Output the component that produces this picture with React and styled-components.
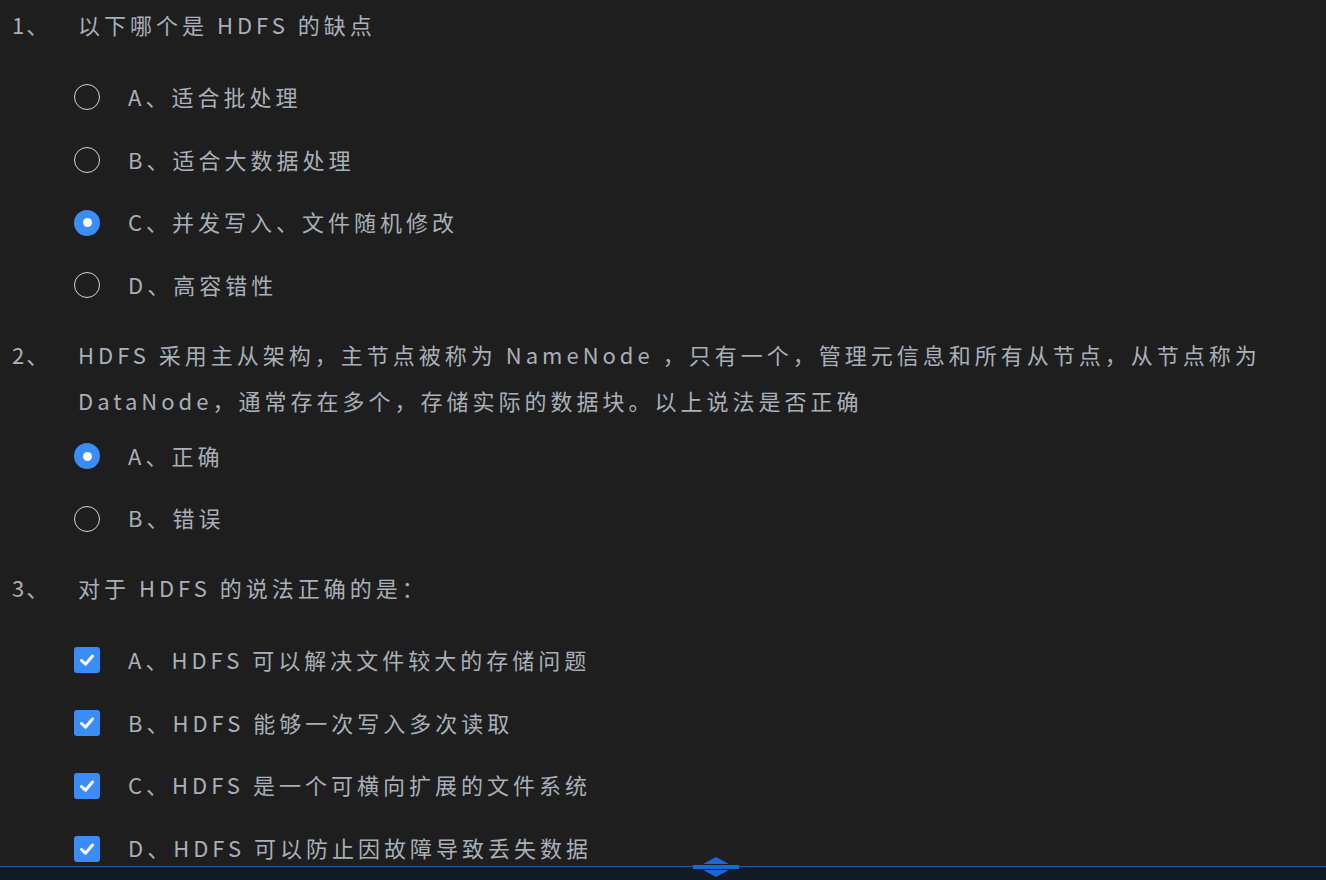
import React from 'react';
import styled, { createGlobalStyle } from 'styled-components';

const GlobalStyle = createGlobalStyle`
	html, body {
		margin: 0;
		padding: 0;
		background: #1e1e1e;
	}
	body {
		font-family: 'Noto Sans CJK SC', 'Noto Sans', sans-serif;
	}
`;

const Page = styled.main`
	height: 880px;
	width: 1326px;
	display: flex;
	flex-direction: column;
	background: #1e1e1e;
	overflow: hidden;
`;

const Scroll = styled.section`
	flex: 1;
	overflow: hidden;
	padding: 3px 0 0 12px;
	display: flex;
	flex-direction: column;
	gap: 16px;
`;

const Question = styled.div`
	display: flex;
	flex-direction: column;
`;

const Title = styled.div`
	display: flex;
	min-height: 63px;
	font-size: 22px;
	line-height: 46px;
	letter-spacing: 4px;
	color: #a9b0b7;
`;

const Num = styled.span`
	flex: 0 0 66px;
	margin: -2px 0 2px;
	letter-spacing: 2px;
`;

const TitleText = styled.span`
	flex: 1;
	margin: -2px 0 2px;
	padding-right: 12px;
`;

const Option = styled.label`
	display: flex;
	align-items: center;
	height: 62.7px;
	padding-left: 62px;
	gap: 28px;
	font-size: 22px;
	letter-spacing: 4px;
	color: #a9b0b7;
`;

const OptionText = styled.span`
	padding-bottom: 3px;
`;

const Radio = styled.span`
	box-sizing: border-box;
	width: 26px;
	height: 26px;
	border-radius: 50%;
	flex: 0 0 26px;
	display: flex;
	align-items: center;
	justify-content: center;
	border: ${(props) => (props.checked ? 'none' : '1.5px solid #d4d4d4')};
	background: ${(props) => (props.checked ? '#3a8cf7' : 'transparent')};

	&::after {
		content: '';
		display: ${(props) => (props.checked ? 'block' : 'none')};
		width: 9px;
		height: 9px;
		border-radius: 50%;
		background: #fff;
	}
`;

const Check = styled.span`
	width: 26px;
	height: 26px;
	flex: 0 0 26px;
	border-radius: 3px;
	background: #3a8cf7;
	display: flex;
	align-items: center;
	justify-content: center;
`;

const Footer = styled.footer`
	position: relative;
	height: 13px;
	flex: 0 0 13px;
	border-top: 1px solid #1f5fa6;
	background: #121b24;
`;

const Handle = styled.svg`
	position: absolute;
	left: 693px;
	top: -11px;
`;

const CheckMark = () => (
	<svg width="18" height="18" viewBox="0 0 18 18">
		<path d="M3.5 9.5 L7.5 13.2 L14.5 5" fill="none" stroke="#fff" strokeWidth="3" strokeLinecap="round" strokeLinejoin="round" />
	</svg>
);

const questions = [
	{
		num: '1、',
		title: '以下哪个是 HDFS 的缺点',
		type: 'radio',
		options: [
			{ label: 'A、适合批处理' },
			{ label: 'B、适合大数据处理' },
			{ label: 'C、并发写入、文件随机修改', checked: true },
			{ label: 'D、高容错性' },
		],
	},
	{
		num: '2、',
		title: 'HDFS 采用主从架构，主节点被称为 NameNode ，只有一个，管理元信息和所有从节点，从节点称为 DataNode，通常存在多个，存储实际的数据块。以上说法是否正确',
		type: 'radio',
		options: [{ label: 'A、正确', checked: true }, { label: 'B、错误' }],
	},
	{
		num: '3、',
		title: '对于 HDFS 的说法正确的是：',
		type: 'check',
		options: [
			{ label: 'A、HDFS 可以解决文件较大的存储问题', checked: true },
			{ label: 'B、HDFS 能够一次写入多次读取', checked: true },
			{ label: 'C、HDFS 是一个可横向扩展的文件系统', checked: true },
			{ label: 'D、HDFS 可以防止因故障导致丢失数据', checked: true },
		],
	},
];

export default function App() {
	return (
		<Page>
			<GlobalStyle />
			<Scroll>
				{questions.map((q) => (
					<Question key={q.num}>
						<Title>
							<Num>{q.num}</Num>
							<TitleText>{q.title}</TitleText>
						</Title>
						{q.options.map((o) => (
							<Option key={o.label}>
								{q.type === 'radio' ? (
									<Radio checked={o.checked} />
								) : (
									<Check>
										<CheckMark />
									</Check>
								)}
								<OptionText>{o.label}</OptionText>
							</Option>
						))}
					</Question>
				))}
			</Scroll>
			<Footer>
				<Handle width="46" height="22" viewBox="0 0 46 22">
					<path d="M10 8 L23 1 L36 8 Z" fill="#1a66dc" />
					<rect x="0" y="9" width="46" height="4" fill="#1a66dc" />
					<path d="M10 14 L36 14 L23 21 Z" fill="#1a66dc" />
				</Handle>
			</Footer>
		</Page>
	);
}
